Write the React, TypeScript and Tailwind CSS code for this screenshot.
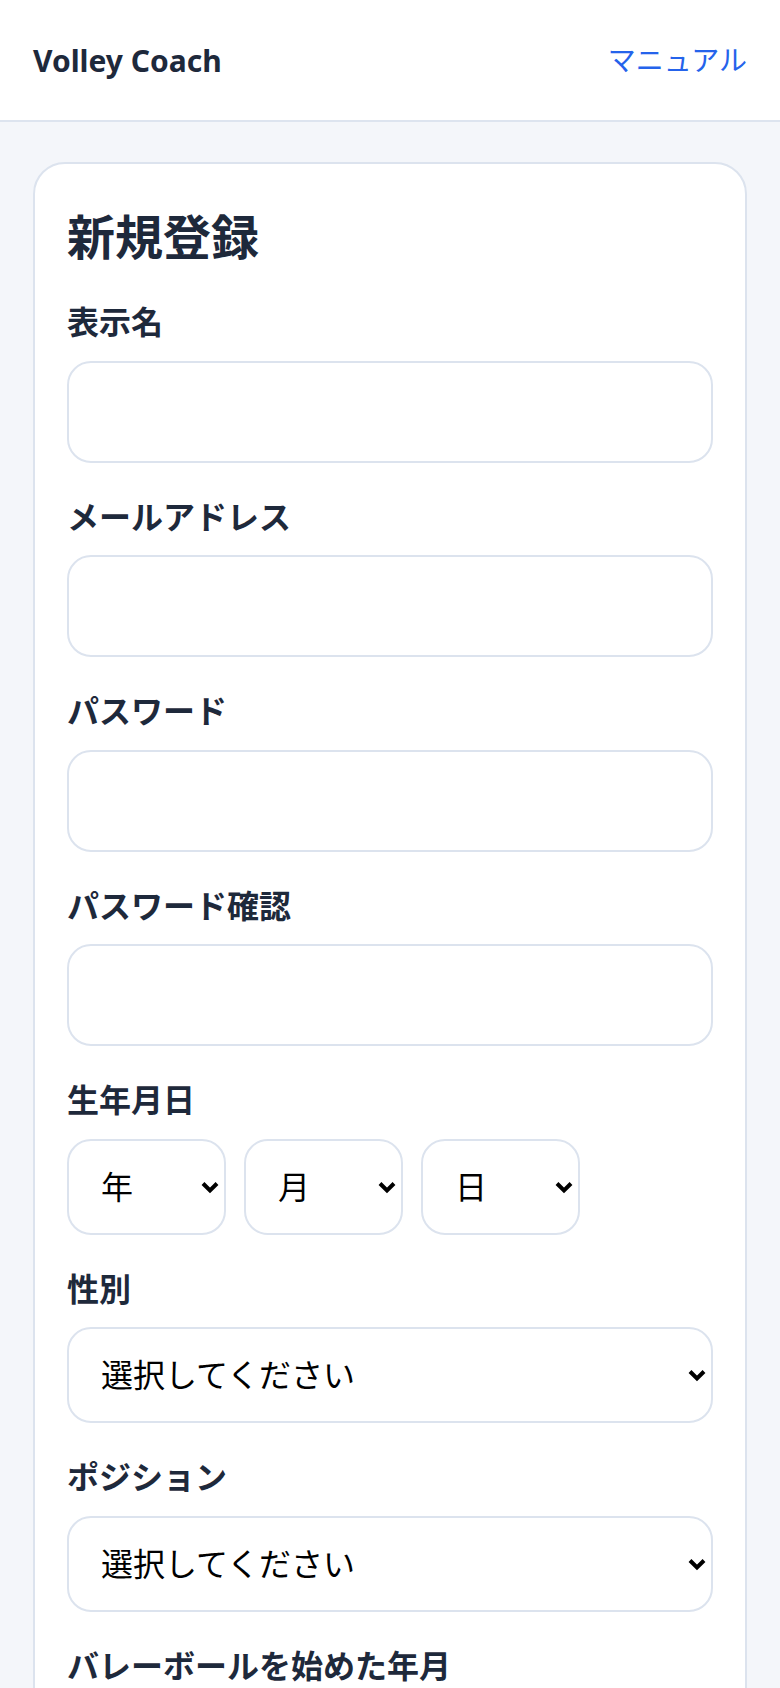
import React from 'react';

const inputClass =
  'block h-[102px] w-full rounded-[24px] border-2 border-[#dce3ee] bg-white px-[32px] text-[32px] text-black outline-none focus:border-[#2563eb]';

const years = Array.from({ length: 60 }, (_, i) => 2024 - i);
const months = Array.from({ length: 12 }, (_, i) => i + 1);
const days = Array.from({ length: 31 }, (_, i) => i + 1);

function Chevron() {
  return (
    <svg
      className="pointer-events-none absolute right-[6px] top-1/2 -translate-y-1/2"
      width="20"
      height="14"
      viewBox="0 0 20 14"
      fill="none"
    >
      <path d="M3 3.5 10 10.5l7-7" stroke="#000" strokeWidth="4" />
    </svg>
  );
}

interface SelectProps {
  placeholder: string;
  options: (string | number)[];
  className?: string;
}

const Select: React.FC<SelectProps> = ({ placeholder, options, className = 'w-full' }) => (
  <div className={`relative ${className}`}>
    <select
      defaultValue=""
      className="block h-[96px] w-full appearance-none rounded-[24px] border-2 border-[#dce3ee] bg-white pl-[32px] pr-[40px] text-[32px] text-black outline-none"
    >
      <option value="">{placeholder}</option>
      {options.map((o) => (
        <option key={o} value={o}>
          {o}
        </option>
      ))}
    </select>
    <Chevron />
  </div>
);

const Label: React.FC<{ children: React.ReactNode; htmlFor?: string }> = ({ children, htmlFor }) => (
  <label htmlFor={htmlFor} className="mb-[14.5px] block text-[32px] font-bold leading-[48px] text-[#1e293b]">
    {children}
  </label>
);

export default function App() {
  return (
    <div className="min-h-screen bg-[#f4f6fa] font-['Noto_Sans','Noto_Sans_CJK_JP',sans-serif]">
      <header className="flex h-[122px] items-center justify-between border-b-2 border-[#dde4ef] bg-white px-[33px]">
        <span className="text-[30px] font-bold text-[#1e293b]">Volley Coach</span>
        <a href="#" className="text-[28px] text-[#2563eb]">
          マニュアル
        </a>
      </header>

      <main className="px-[33px] pb-[40px] pt-[40px]">
        <div className="rounded-[32px] border-2 border-[#dce3ee] bg-white px-[32px] pb-[40px] pt-[43px]">
          <h1 className="mb-[31px] text-[48px] font-bold leading-[60px] text-[#1e293b]">新規登録</h1>

          <form className="flex flex-col gap-[30px]" onSubmit={(e) => e.preventDefault()}>
            <div>
              <Label htmlFor="name">表示名</Label>
              <input id="name" type="text" className={inputClass} />
            </div>
            <div>
              <Label htmlFor="email">メールアドレス</Label>
              <input id="email" type="email" className={inputClass} />
            </div>
            <div>
              <Label htmlFor="password">パスワード</Label>
              <input id="password" type="password" className={inputClass} />
            </div>
            <div>
              <Label htmlFor="password2">パスワード確認</Label>
              <input id="password2" type="password" className={inputClass} />
            </div>
            <div>
              <Label>生年月日</Label>
              <div className="flex gap-[18px]">
                <Select placeholder="年" options={years} className="w-[159px]" />
                <Select placeholder="月" options={months} className="w-[159px]" />
                <Select placeholder="日" options={days} className="w-[159px]" />
              </div>
            </div>
            <div>
              <Label>性別</Label>
              <Select placeholder="選択してください" options={['男性', '女性', 'その他']} />
            </div>
            <div>
              <Label>ポジション</Label>
              <Select
                placeholder="選択してください"
                options={['セッター', 'アウトサイドヒッター', 'ミドルブロッカー', 'オポジット', 'リベロ']}
              />
            </div>
            <div>
              <Label>バレーボールを始めた年月</Label>
              <div className="flex gap-[18px]">
                <Select placeholder="年" options={years} className="w-[159px]" />
                <Select placeholder="月" options={months} className="w-[159px]" />
              </div>
            </div>
          </form>
        </div>
      </main>
    </div>
  );
}
